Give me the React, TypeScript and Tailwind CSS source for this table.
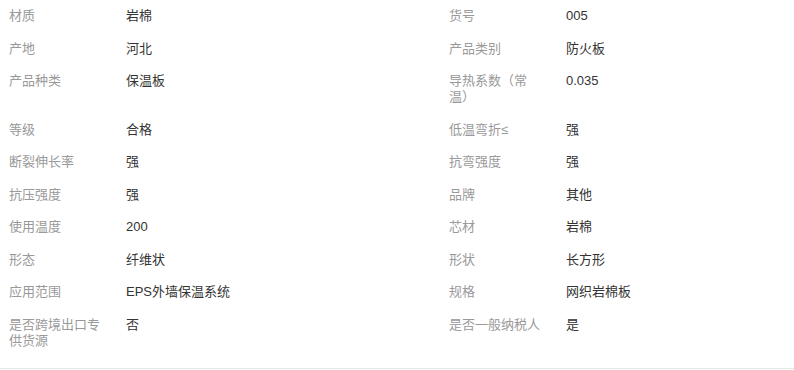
const rows: [string, string, string, string][] = [
  ["材质", "岩棉", "货号", "005"],
  ["产地", "河北", "产品类别", "防火板"],
  ["产品种类", "保温板", "导热系数（常温）", "0.035"],
  ["等级", "合格", "低温弯折≤", "强"],
  ["断裂伸长率", "强", "抗弯强度", "强"],
  ["抗压强度", "强", "品牌", "其他"],
  ["使用温度", "200", "芯材", "岩棉"],
  ["形态", "纤维状", "形状", "长方形"],
  ["应用范围", "EPS外墙保温系统", "规格", "网织岩棉板"],
  ["是否跨境出口专供货源", "否", "是否一般纳税人", "是"],
];

function Pair({ label, value, className }: { label: string; value: string; className?: string }) {
  return (
    <div className={"flex " + (className ?? "")}>
      <div className="w-[117px] shrink-0 pr-[24px] text-[#999999]">{label}</div>
      <div className="flex-1 text-[#333333]">{value}</div>
    </div>
  );
}

export default function App() {
  return (
    <div
      className="w-[794px] bg-white pl-[9px] pb-[11px] border-b border-[#e8e8e8] text-[13px] leading-4"
      style={{ fontFamily: '"Liberation Sans", "Noto Sans CJK SC", sans-serif' }}
    >
      {rows.map(([l1, v1, l2, v2]) => (
        <div key={l1} className="flex py-[8.25px]">
          <Pair label={l1} value={v1} className="w-[440px]" />
          <Pair label={l2} value={v2} className="flex-1" />
        </div>
      ))}
    </div>
  );
}
